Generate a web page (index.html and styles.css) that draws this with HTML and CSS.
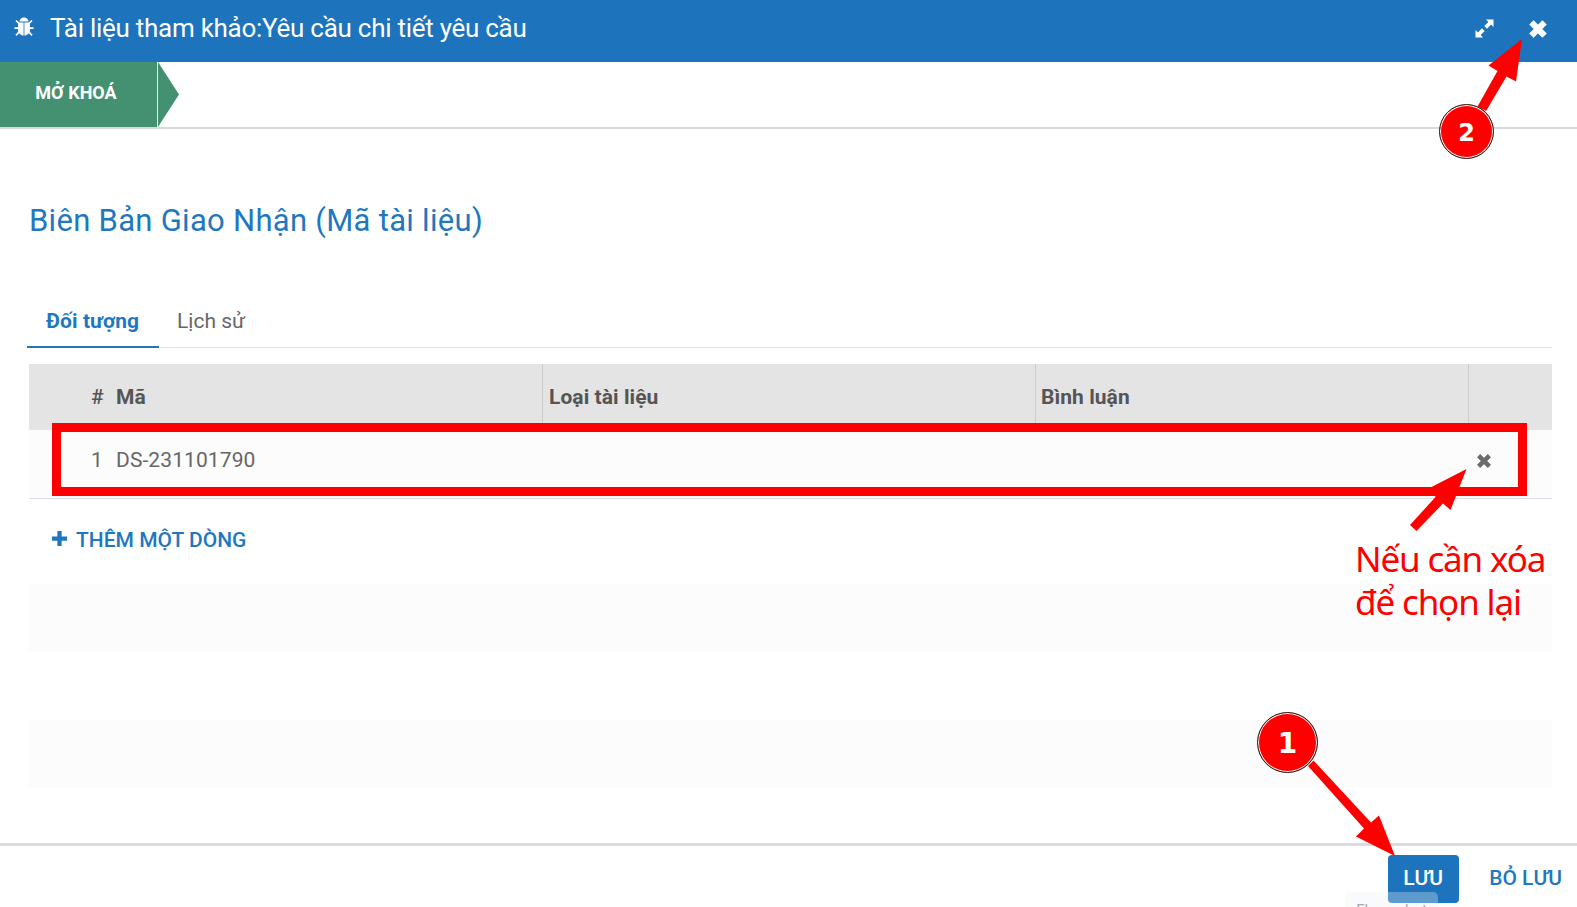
FILE: index.html
```html
<!DOCTYPE html>
<html lang="vi">
<head>
<meta charset="utf-8">
<title>Tài liệu tham khảo</title>
<link rel="stylesheet" href="styles.css">
</head>
<body>
<div class="dialog">
  <header class="titlebar">
    <svg class="bug" viewBox="0 0 20 20"><path d="M5.500 4.600a4.500 4.200 0 0 1 9 0z"/><path d="M4 5.600h5.600v13C6.500 18.300 4 16 4 13zM10.400 5.600H16v7.400c0 3-2.500 5.300-5.600 5.600z"/><path class="legs" d="M5.500 7 2 3.500M14.500 7l3.500-3.500M5 11.200H.5M15 11.200h4.500M5.500 14.500l-3.500 3.800M14.500 14.500l3.500 3.800"/></svg>
    <h1 class="title">Tài liệu tham khảo:Yêu cầu chi tiết yêu cầu</h1>
    <svg class="expand" viewBox="0 0 20 20"><path d="M11.500 0.500H19.500V8.500L16.900 5.900 12.600 10.200 9.800 7.400 14.100 3.100zM.5 11.500V19.500H8.500L5.900 16.900 10.200 12.600 7.400 9.800 3.100 14.100z"/></svg>
    <svg class="close" viewBox="0 0 20 20"><path d="M4 4l12 12M16 4 4 16"/></svg>
  </header>
  <div class="statusbar">
    <button class="status"><span>MỞ KHOÁ</span></button>
    <svg class="status-arrow" viewBox="0 0 21 65"><path d="M0 0 21 32.500 0 65z"/></svg>
  </div>
  <main class="sheet">
    <h2 class="heading">Biên Bản Giao Nhận (Mã tài liệu)</h2>
    <nav class="tabs"><a class="tab active">Đối tượng</a><a class="tab">Lịch sử</a></nav>
    <section class="grid">
      <div class="row head"><div class="num">#</div><div class="c1">Mã</div><div class="c2">Loại tài liệu</div><div class="c3">Bình luận</div><div class="c4"></div></div>
      <div class="row item"><div class="num">1</div><div class="c1 code">DS-231101790</div><div class="c2"></div><div class="c3"></div><div class="c4"><svg class="del" viewBox="0 0 20 20"><path d="M4 4l12 12M16 4 4 16"/></svg></div></div>
      <div class="row add"><svg class="plus" viewBox="0 0 18 18"><path d="M9 1v16M1 9h16"/></svg><span>THÊM MỘT DÒNG</span></div>
      <div class="row blank"></div>
      <div class="row"></div>
      <div class="row blank"></div>
    </section>
  </main>
  <footer class="footer"><button class="save"><span>LƯU</span></button><button class="discard"><span>BỎ LƯU</span></button></footer>
</div>
<div class="tooltip">Flameshot</div>
<div class="highlight"></div>
<svg class="arrows" viewBox="0 0 1577 907">
  <path d="M1522 39 1516 81.500 1506.500 76.500 1486 111 1477.500 106.500 1497.500 71 1488.500 65.500z"/>
  <path d="M1466.500 469 1450.500 510 1443 503.500 1416.500 531 1410 525 1435.500 497 1431.500 487z"/>
  <path d="M1395 856 1379 815.500 1371 822.500 1313.500 760.500 1308 766 1364 828.500 1356 836.500z"/>
</svg>
<div class="badge badge-two">2</div>
<div class="badge badge-one">1</div>
<p class="note">Nếu cần xóa<br>để chọn lại</p>
</body>
</html>
```
FILE: styles.css
```css
* { box-sizing: border-box; }
body { margin: 0; width: 1577px; height: 907px; overflow: hidden; position: relative; background: #fff; font-family: Roboto, "Liberation Sans", sans-serif; font-size: 21px; color: #666; }
h1, h2, p { margin: 0; font-weight: 400; }
button { border: 0; padding: 0; background: none; font: inherit; }
span { white-space: nowrap; }
.dialog { display: flex; flex-direction: column; height: 907px; }
.titlebar { height: 61.500px; flex: none; background: #1d74bc; display: flex; align-items: center; padding: 0 28px 5px 14px; color: #fff; }
.bug { width: 20px; height: 20px; fill: #fff; margin: 0 16px 2px 0; }
.legs { stroke: #fff; stroke-width: 1.700; fill: none; }
.title { font-size: 26px; line-height: 40px; margin-right: auto; white-space: nowrap; letter-spacing: -0.270px; }
.expand { width: 19px; height: 19px; fill: #fff; margin: 0 33px 0 0; }
.close { width: 22px; height: 22px; stroke: #fff; stroke-width: 5.700; margin-top: 2px; }
.statusbar { height: 67.500px; flex: none; display: flex; border-bottom: 2px solid #d6dade; }
.status { width: 157px; height: 65px; background: #449172; color: #fff; font-size: 18px; font-weight: 700; padding: 0 5px 3px 0; margin-right: 1px; }
.status-arrow { width: 21px; height: 65px; fill: #449172; }
.sheet { flex: 1; padding: 72px 25px 0 27px; }
.heading { color: #1f78bf; font-size: 31px; line-height: 40px; padding-left: 2px; white-space: nowrap; letter-spacing: 0.290px; }
.tabs { margin-top: 54px; height: 53px; display: flex; border-bottom: 1px solid #dee2e8; }
.tab { height: 53px; padding: 13px 19px 0; line-height: 26px; }
.active { width: 132px; color: #1f78bf; font-weight: 700; border-bottom: 2px solid #1f78bf; letter-spacing: 0.080px; }
.tab:last-child { padding-left: 18px; }
.grid { margin: 16px 0 0 2px; }
.row { display: flex; align-items: center; height: 68px; }
.head { height: 66px; background: #e4e4e4; color: #555; font-weight: 700; letter-spacing: 0.060px; }
.item { height: 69px; background: #fcfcfc; border-bottom: 1px solid #dde1e7; padding-bottom: 8px; }
.code { letter-spacing: 0.100px; }
.num { width: 87px; padding-left: 62px; font-weight: 400; }
.head .num { font-weight: 500; }
.c1 { width: 426px; }
.c2 { width: 493px; padding-left: 6px; }
.c3 { width: 433px; padding-left: 5px; }
.c4 { flex: 1; padding-left: 7px; }
.head > div { height: 66px; line-height: 66px; }
.head .c2, .head .c3, .head .c4 { border-left: 1px solid #ccc; }
.del { display: block; width: 18px; height: 18px; stroke: #6c6c6c; stroke-width: 5; margin-top: 1px; }
.add { height: 85px; padding: 0 0 4px 22px; color: #1f78bf; font-weight: 500; }
.plus { width: 17px; height: 17px; stroke: #1f78bf; stroke-width: 4.500; margin: 0 8px 2px 0; }
.blank { background: #fcfcfc; }
.footer { height: 64px; flex: none; border-top: 3px solid #d8dce0; display: flex; padding: 9px 15px 0 0; justify-content: flex-end; font-weight: 500; }
.save { width: 71px; height: 48px; background: #1d74bc; border-radius: 4px; color: #fff; padding: 0 1px 2px 0; }
.discard { height: 48px; color: #1f78bf; padding-bottom: 2px; margin-left: 30px; }
.tooltip { position: absolute; left: 1345px; top: 892px; width: 93px; height: 15px; overflow: hidden; border-radius: 5px 5px 0 0; background: rgba(236,240,243,.32); color: #aaa; font: 15px/36px Roboto, sans-serif; text-align: center; }
.highlight { position: absolute; left: 52px; top: 422.500px; width: 1475px; height: 73px; border: 9px solid #f00; }
.arrows { position: absolute; left: 0; top: 0; width: 1577px; height: 907px; fill: #f00; }
.badge { position: absolute; border-radius: 50%; background: #f00; border: 1.500px solid #222; box-shadow: inset 0 0 0 1px #fff; color: #fff; font: 700 24px/57px "DejaVu Sans", sans-serif; text-align: center; }
.badge-two { left: 1439px; top: 104px; width: 55px; height: 55px; }
.badge-one { left: 1257px; top: 711.500px; width: 61px; height: 61px; font-size: 28px; line-height: 62px; }
.note { position: absolute; left: 1355px; top: 537px; color: #f00; font: 35px/43px "Noto Sans", sans-serif; letter-spacing: -1.150px; white-space: nowrap; }
```
